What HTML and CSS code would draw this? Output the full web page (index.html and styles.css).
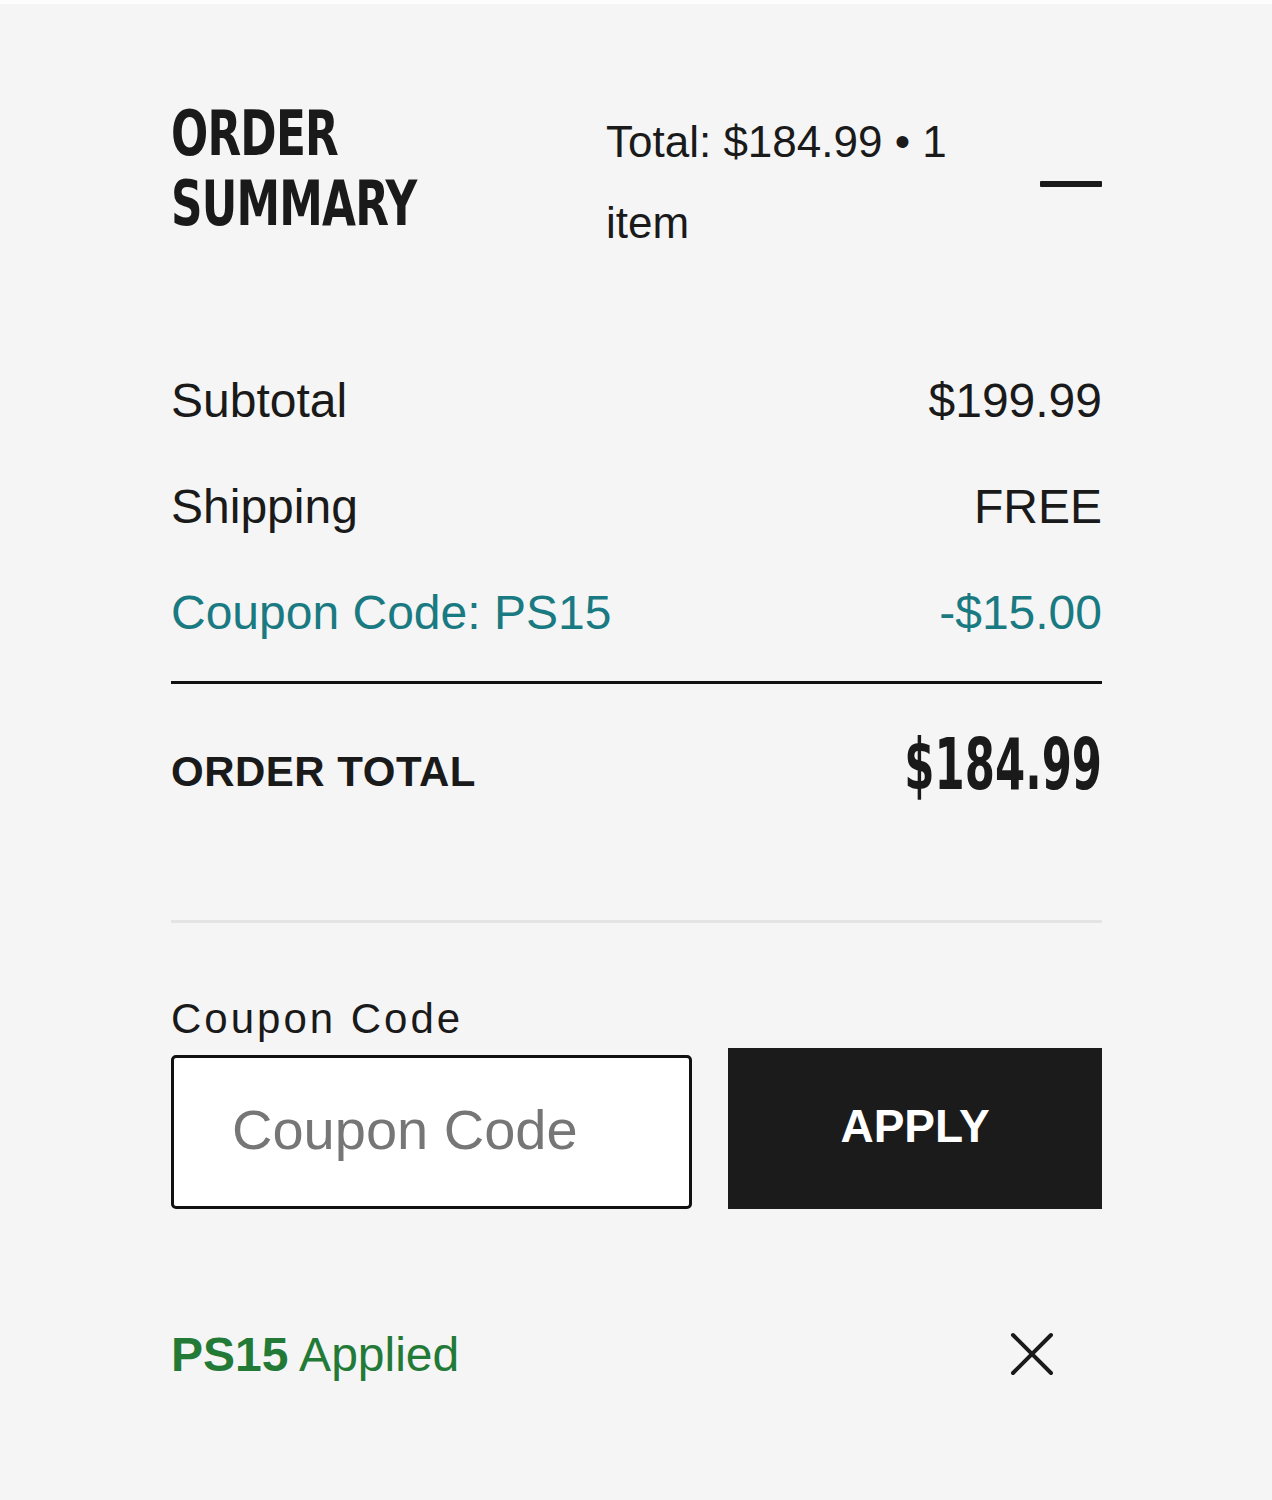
FILE: index.html
```html
<!DOCTYPE html>
<html lang="en">
<head>
<meta charset="utf-8">
<title>Order Summary</title>
<link rel="stylesheet" href="styles.css">
</head>
<body>
<div class="topstrip"></div>
<main class="summary">
  <header class="summary-head">
    <div class="title-box"><h1 class="title">ORDER<br>SUMMARY</h1></div>
    <p class="head-total">Total: $184.99 • 1 item</p>
    <button class="collapse" aria-label="Collapse"><span class="minus"></span></button>
  </header>

  <section class="lines">
    <div class="line"><span>Subtotal</span><span>$199.99</span></div>
    <div class="line"><span>Shipping</span><span>FREE</span></div>
    <div class="line line-coupon"><span>Coupon Code: PS15</span><span>-$15.00</span></div>
  </section>

  <div class="order-total">
    <span class="ot-label">ORDER TOTAL</span>
    <span class="ot-value">$184.99</span>
  </div>

  <hr class="sep">

  <form class="coupon-form">
    <label class="coupon-label" for="coupon">Coupon Code</label>
    <div class="coupon-row">
      <input id="coupon" class="coupon-input" type="text" placeholder="Coupon Code">
      <button type="button" class="apply">APPLY</button>
    </div>
  </form>

  <div class="applied">
    <span class="applied-text"><b>PS15</b> Applied</span>
    <button class="remove" aria-label="Remove coupon">
      <svg width="44" height="44" viewBox="0 0 44 44"><path d="M3 3 L41 41 M41 3 L3 41" stroke="#1a1a1a" stroke-width="4" stroke-linecap="round" fill="none"/></svg>
    </button>
  </div>
</main>
</body>
</html>
```

FILE: styles.css
```css
* { box-sizing: border-box; }

html, body {
  margin: 0;
  padding: 0;
  background: #f5f5f5;
}

body {
  font-family: "Liberation Sans", Arial, sans-serif;
  color: #1a1a1a;
  min-height: 1500px;
}

.topstrip {
  height: 4px;
  background: #fdfdfd;
}

.summary {
  width: 931px;
  margin-left: 171px;
}

.summary-head {
  display: flex;
  align-items: flex-start;
  padding-top: 95px;
}

.title-box {
  width: 435px;
  flex: none;
}

.title {
  margin: 0;
  font-family: "DejaVu Sans Condensed", "Liberation Sans", sans-serif;
  font-stretch: condensed;
  font-weight: 700;
  font-size: 62px;
  line-height: 70px;
  letter-spacing: -1px;
  color: #1a1a1a;
  transform: scaleX(0.785);
  transform-origin: left center;
}

.head-total {
  margin: 2px 0 0;
  width: 370px;
  font-size: 44px;
  line-height: 81px;
  color: #1a1a1a;
}

.collapse {
  margin-left: auto;
  margin-top: 82px;
  background: none;
  border: 0;
  padding: 0;
  width: 62px;
  height: 6px;
  display: flex;
}

.minus {
  display: block;
  width: 62px;
  height: 6px;
  background: #1a1a1a;
  border-radius: 1px;
}

.lines {
  margin-top: 85px;
}

.line {
  display: flex;
  justify-content: space-between;
  font-size: 48px;
  line-height: 106px;
  color: #1a1a1a;
}

.line-coupon {
  color: #1a7a82;
}

.order-total {
  margin-top: 15px;
  border-top: 3px solid #111;
  padding-top: 40px;
  display: flex;
  justify-content: space-between;
  align-items: baseline;
}

.ot-label {
  font-size: 42px;
  font-weight: 700;
  letter-spacing: 0.5px;
  position: relative;
  top: -3px;
}

.ot-value {
  display: inline-block;
  font-family: "DejaVu Sans Condensed", "Liberation Sans", sans-serif;
  font-stretch: condensed;
  font-weight: 700;
  font-size: 72px;
  line-height: 80px;
  letter-spacing: 0;
  transform: scaleX(0.67);
  transform-origin: right center;
}

.sep {
  margin: 116px 0 0;
  border: 0;
  height: 3px;
  background: #e4e4e4;
}

.coupon-form {
  margin-top: 72px;
}

.coupon-label {
  display: block;
  font-size: 42px;
  line-height: 48px;
  letter-spacing: 3px;
  color: #1a1a1a;
}

.coupon-row {
  margin-top: 5px;
  display: flex;
  align-items: flex-end;
  gap: 36px;
}

.coupon-input {
  width: 521px;
  height: 154px;
  border: 3px solid #111;
  border-radius: 5px;
  background: #fff;
  padding: 0 0 6px 58px;
  font-family: "Liberation Sans", Arial, sans-serif;
  font-size: 56px;
  color: #1a1a1a;
  outline: none;
}

.coupon-input::placeholder {
  color: #767676;
}

.apply {
  flex: 1;
  height: 161px;
  border: 0;
  background: #1b1b1b;
  color: #fff;
  font-family: "Liberation Sans", Arial, sans-serif;
  font-weight: 700;
  font-size: 46px;
  padding: 0 0 6px;
}

.applied {
  margin-top: 115px;
  display: flex;
  justify-content: space-between;
  align-items: center;
  height: 60px;
}

.applied-text {
  font-size: 48px;
  color: #227a36;
}

.applied-text b {
  font-weight: 700;
}

.remove {
  background: none;
  border: 0;
  padding: 0;
  margin-right: 48px;
  width: 44px;
  height: 44px;
  display: flex;
}
```
